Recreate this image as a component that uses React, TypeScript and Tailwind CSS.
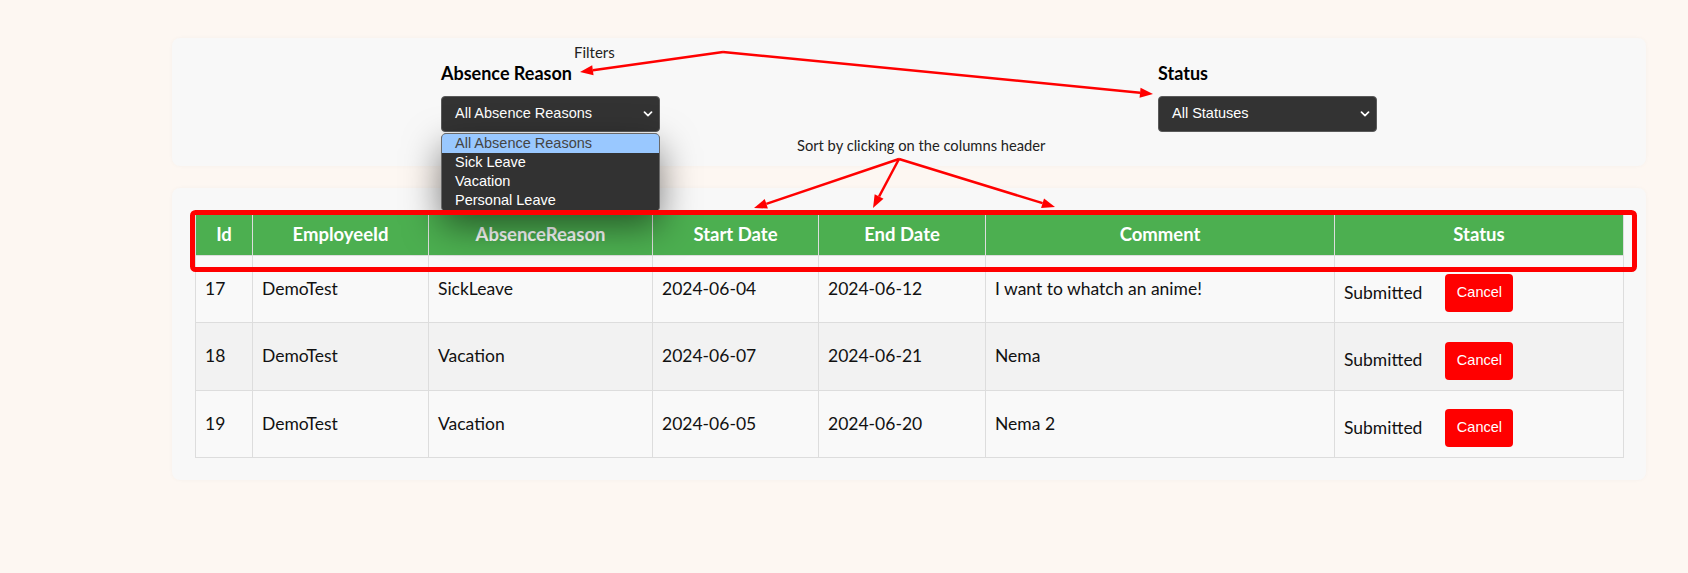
import React from "react";

type Row = {
  id: number;
  employeeId: string;
  reason: string;
  start: string;
  end: string;
  comment: string;
  status: string;
};

const rows: Row[] = [
  { id: 17, employeeId: "DemoTest", reason: "SickLeave", start: "2024-06-04", end: "2024-06-12", comment: "I want to whatch an anime!", status: "Submitted" },
  { id: 18, employeeId: "DemoTest", reason: "Vacation", start: "2024-06-07", end: "2024-06-21", comment: "Nema", status: "Submitted" },
  { id: 19, employeeId: "DemoTest", reason: "Vacation", start: "2024-06-05", end: "2024-06-20", comment: "Nema 2", status: "Submitted" },
];

const columns = [
  { title: "Id", width: 57 },
  { title: "EmployeeId", width: 176 },
  { title: "AbsenceReason", width: 224 },
  { title: "Start Date", width: 166 },
  { title: "End Date", width: 167 },
  { title: "Comment", width: 349 },
  { title: "Status", width: 289 },
];

const reasonOptions = ["All Absence Reasons", "Sick Leave", "Vacation", "Personal Leave"];

const Chevron = () => (
  <svg width="10" height="6" viewBox="0 0 10 6" fill="none">
    <path d="M1.5 1.2L5 4.6L8.5 1.2" stroke="white" strokeWidth="1.7" strokeLinecap="round" strokeLinejoin="round" />
  </svg>
);

const FilterBox = ({ label, value, open }: { label: string; value: string; open?: boolean }) => (
  <div className="w-[219px]">
    <div className="text-[18px] leading-[22px] font-bold text-black">{label}</div>
    <div className="relative mt-[12px]">
      <div className="flex h-[36px] items-center justify-between rounded-[4px] border border-[#5a5a5a] bg-[#333333] pl-[13px] pr-[6px] font-['Liberation_Sans',Arial,sans-serif] text-[14.5px] text-white">
        <span>{value}</span>
        <Chevron />
      </div>
      {open && (
        <div className="absolute left-0 top-[37px] z-20 w-[219px] overflow-hidden rounded-[5px] border border-[#6a6a6a] bg-[#323232] pb-[1px] font-['Liberation_Sans',Arial,sans-serif] text-[14.5px] shadow-[0_14px_36px_rgba(0,0,0,0.5)]">
          {reasonOptions.map((opt, i) => (
            <div
              key={opt}
              className={
                i === 0
                  ? "h-[19px] bg-[#99c8ff] pl-[13px] leading-[19px] text-[#444]"
                  : "h-[19px] pl-[13px] leading-[19px] text-white"
              }
            >
              {opt}
            </div>
          ))}
        </div>
      )}
    </div>
  </div>
);

// little helper for the red annotation arrows
const arrowHead = (x1: number, y1: number, x2: number, y2: number) => {
  const len = Math.hypot(x2 - x1, y2 - y1);
  const ux = (x2 - x1) / len;
  const uy = (y2 - y1) / len;
  const bx = x2 - ux * 13;
  const by = y2 - uy * 13;
  const nx = -uy * 5;
  const ny = ux * 5;
  return {
    base: [bx, by],
    points: `${x2},${y2} ${bx + nx},${by + ny} ${bx - nx},${by - ny}`,
  };
};

const arrows = [
  [723, 52, 580, 72],
  [723, 52, 1153, 94],
  [899, 159, 754, 208],
  [899, 159, 873, 208],
  [899, 159, 1055, 207],
];

const Annotations = () => (
  <div className="pointer-events-none absolute left-0 top-0 z-30 h-[573px] w-[1688px]">
    <div className="absolute left-[574px] top-[45px] text-[15px] leading-[15px] text-[#222]">Filters</div>
    <div className="absolute left-[797px] top-[138px] text-[14.7px] leading-[15px] text-[#222]">
      Sort by clicking on the columns header
    </div>
    <svg className="absolute left-0 top-0" width="1688" height="573">
      <rect x="192.5" y="212.5" width="1442" height="57" rx="3" fill="none" stroke="#ff0000" strokeWidth="5" />
      {arrows.map(([x1, y1, x2, y2], i) => {
        const head = arrowHead(x1, y1, x2, y2);
        return (
          <g key={i}>
            <line x1={x1} y1={y1} x2={head.base[0]} y2={head.base[1]} stroke="#ff0000" strokeWidth="2.5" />
            <polygon points={head.points} fill="#ff0000" />
          </g>
        );
      })}
    </svg>
  </div>
);

const App = () => {
  return (
    <div className="relative min-h-screen bg-[#fdf7f2] pt-[38px] font-['Lato',sans-serif]">
      <div className="ml-[172px] w-[1474px]">
        <div className="relative z-10 flex justify-around rounded-[8px] bg-[#f8f8f8] px-5 pb-[34px] pt-[24px] shadow-[0_0_4px_rgba(0,0,0,0.03)]">
          <FilterBox label="Absence Reason" value="All Absence Reasons" open />
          <FilterBox label="Status" value="All Statuses" />
        </div>

        <div className="mt-[22px] rounded-[8px] bg-[#f8f8f8] px-[23px] pb-[22px] pt-[25px] shadow-[0_0_4px_rgba(0,0,0,0.03)]">
          <table className="w-[1428px] table-fixed border-collapse">
            <colgroup>
              {columns.map((c) => (
                <col key={c.title} style={{ width: c.width }} />
              ))}
            </colgroup>
            <thead>
              <tr className="h-[42px] bg-[#4caf50]">
                {columns.map((c) => (
                  <th key={c.title} className="border border-[#dddddd] text-center text-[18.5px] font-bold text-white">
                    {c.title}
                  </th>
                ))}
              </tr>
            </thead>
            <tbody>
              {rows.map((r, i) => (
                <tr key={r.id} className={i % 2 === 1 ? "h-[68px] bg-[#f2f2f2]" : "h-[67px] bg-[#f9f9f9]"}>
                  <td className="border border-[#dddddd] pl-[9px] text-[17.5px] text-[#111]">{r.id}</td>
                  <td className="border border-[#dddddd] pl-[9px] text-[17.5px] text-[#111]">{r.employeeId}</td>
                  <td className="border border-[#dddddd] pl-[9px] text-[17.5px] text-[#111]">{r.reason}</td>
                  <td className="border border-[#dddddd] pl-[9px] text-[17.5px] text-[#111]">{r.start}</td>
                  <td className="border border-[#dddddd] pl-[9px] text-[17.5px] text-[#111]">{r.end}</td>
                  <td className="border border-[#dddddd] pl-[9px] text-[17.5px] text-[#111]">{r.comment}</td>
                  <td className="border border-[#dddddd] pl-[9px] text-[17.5px] text-[#111]">
                    <div className="flex items-center pt-[8px]">
                      <span>{r.status}</span>
                      <button className="ml-[23px] h-[38px] w-[68px] rounded-[4px] bg-[#ff0000] font-['Liberation_Sans',Arial,sans-serif] text-[14.5px] text-white">
                        Cancel
                      </button>
                    </div>
                  </td>
                </tr>
              ))}
            </tbody>
          </table>
        </div>
      </div>
      <Annotations />
    </div>
  );
};

export default App;
